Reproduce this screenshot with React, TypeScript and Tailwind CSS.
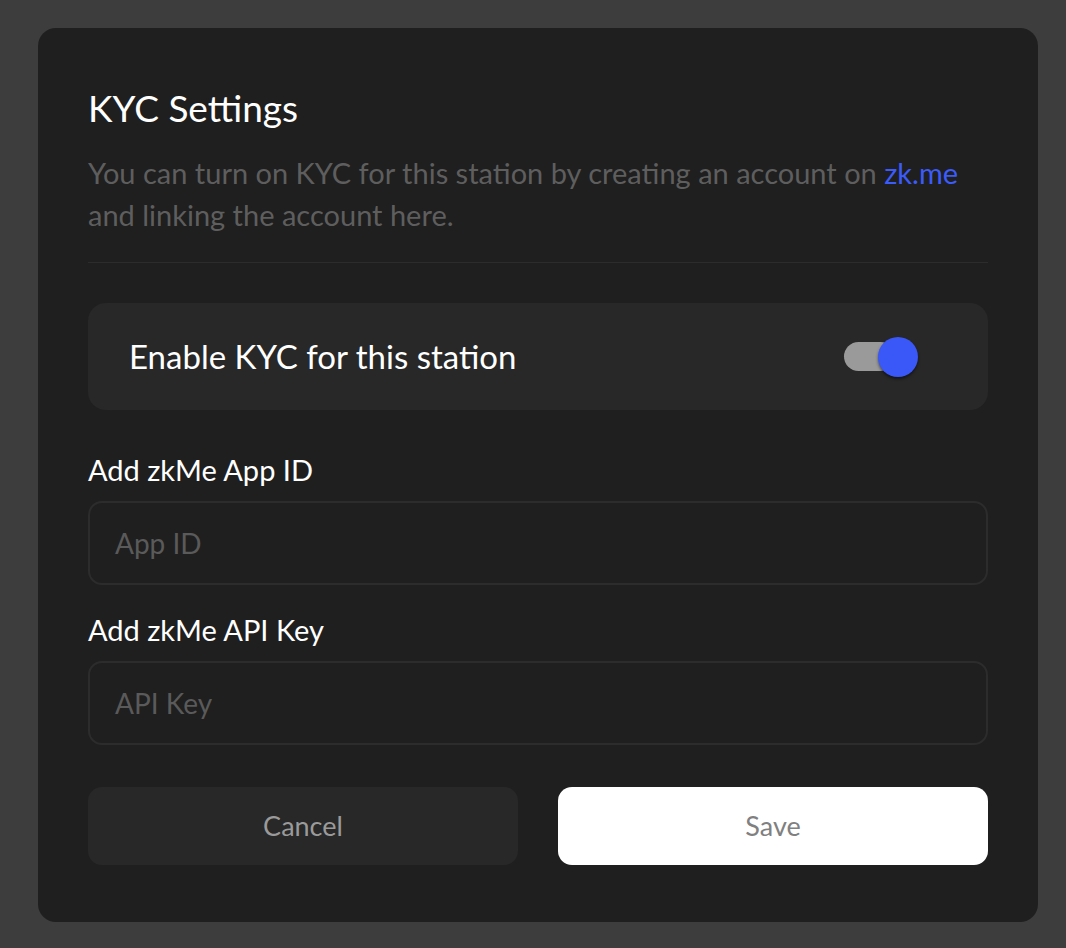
export default function App() {
  return (
    <div className="min-h-[948px] w-full bg-[#3d3d3d] pt-[28px] pl-[38px]" style={{ fontFamily: 'Lato, "Noto Sans", sans-serif' }}>
      <div className="w-[1000px] h-[894px] rounded-[18px] bg-[#1f1f1f] px-[50px] pt-[58px]">
        <h1 className="text-[37px] leading-[44px] text-white font-normal">KYC Settings</h1>
        <p className="mt-[22px] text-[29px] leading-[42px] text-[#5e5e5e]">
          You can turn on KYC for this station by creating an account on{" "}
          <a className="text-[#3b5bfb]">zk.me</a> and linking the account here.
        </p>
        <div className="mt-[26px] h-px bg-[#2c2c2c]" />

        <div className="mt-[40px] h-[107px] rounded-[18px] bg-[#282828] pl-[41px] pr-[70px] flex items-center justify-between">
          <span className="text-[33px] text-white">Enable KYC for this station</span>
          <div className="relative w-[74px] h-[40px] flex items-center">
            <div className="w-[51px] h-[29px] rounded-full bg-[#9a9a9a]" />
            <div className="absolute right-0 top-0 w-[40px] h-[40px] rounded-full bg-[#3a57f8] shadow-[0_2px_3px_rgba(0,0,0,0.5)]" />
          </div>
        </div>

        <div className="mt-[40px] text-[29px] leading-[40px] text-white">Add zkMe App ID</div>
        <div className="mt-[11px] h-[84px] rounded-[14px] border-2 border-[#2c2c2c] flex items-center px-[25px] text-[28px] text-[#5a5a5a]">
          App ID
        </div>

        <div className="mt-[25px] text-[29px] leading-[40px] text-white">Add zkMe API Key</div>
        <div className="mt-[11px] h-[84px] rounded-[14px] border-2 border-[#2c2c2c] flex items-center px-[25px] text-[28px] text-[#5a5a5a]">
          API Key
        </div>

        <div className="mt-[42px] grid grid-cols-2 gap-[40px]">
          <button className="h-[78px] rounded-[14px] bg-[#282828] text-[27px] text-[#9a9a9a]">Cancel</button>
          <button className="h-[78px] rounded-[14px] bg-white text-[27px] text-[#808080]">Save</button>
        </div>
      </div>
    </div>
  )
}
